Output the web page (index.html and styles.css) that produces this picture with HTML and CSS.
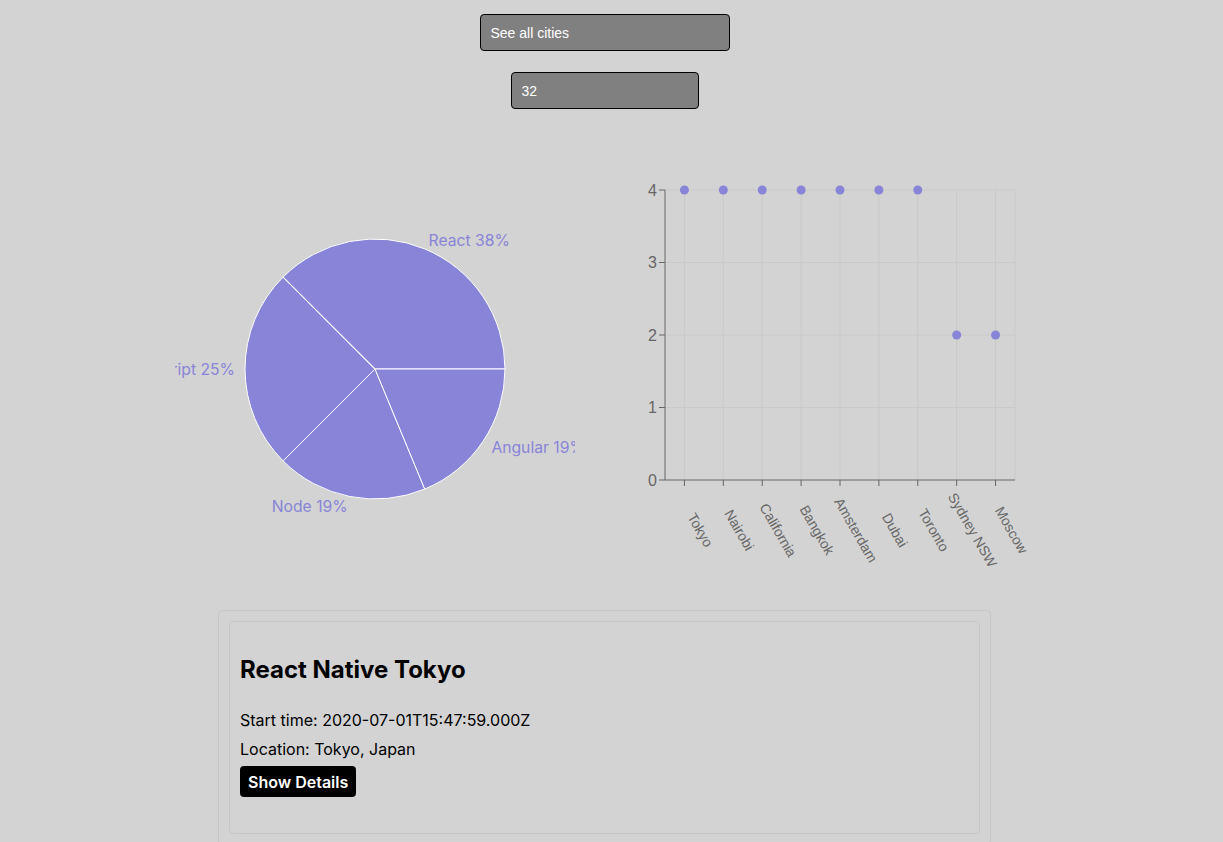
FILE: index.html
```html
<!DOCTYPE html>
<html lang="en">
<head>
<meta charset="utf-8">
<title>Meet App</title>
<link rel="stylesheet" href="styles.css">
</head>
<body>
<div class="app">
  <input class="city-search" type="text" value="See all cities">
  <input class="event-count" type="number" value="32">
  <div class="charts">
    <svg class="pie-chart" width="400" height="400" viewBox="0 0 400 400">
      <g class="slices" fill="#8884d8" stroke="#fff" stroke-width="1">
        <path d="M200 200 L330 200 A130 130 0 0 0 108.08 108.08 Z"/>
        <path d="M200 200 L108.08 108.08 A130 130 0 0 0 108.08 291.92 Z"/>
        <path d="M200 200 L108.08 291.92 A130 130 0 0 0 249.75 320.10 Z"/>
        <path d="M200 200 L249.75 320.10 A130 130 0 0 0 330 200 Z"/>
      </g>
      <g class="slice-edges" fill="none" stroke="#fff" stroke-width="1.1">
        <line x1="200" y1="200" x2="108.08" y2="108.08"/>
      </g>
      <g class="pie-labels">
        <text x="253.6" y="71.5" text-anchor="start">React 38%</text>
        <text x="60" y="200.5" text-anchor="end">JavaScript 25%</text>
        <text x="172.7" y="337.5" text-anchor="end">Node 19%</text>
        <text x="316.4" y="278.3" text-anchor="start">Angular 19%</text>
      </g>
    </svg>
    <svg class="scatter-chart" width="420" height="400" viewBox="0 0 420 400">
      <g class="grid" stroke="#c9c9c9" stroke-width="1">
        <line x1="50" y1="21" x2="400" y2="21"/>
        <line x1="50" y1="93.5" x2="400" y2="93.5"/>
        <line x1="50" y1="166" x2="400" y2="166"/>
        <line x1="50" y1="238.5" x2="400" y2="238.5"/>
        <line x1="69.44" y1="21" x2="69.44" y2="311"/>
        <line x1="108.33" y1="21" x2="108.33" y2="311"/>
        <line x1="147.22" y1="21" x2="147.22" y2="311"/>
        <line x1="186.11" y1="21" x2="186.11" y2="311"/>
        <line x1="225" y1="21" x2="225" y2="311"/>
        <line x1="263.89" y1="21" x2="263.89" y2="311"/>
        <line x1="302.78" y1="21" x2="302.78" y2="311"/>
        <line x1="341.67" y1="21" x2="341.67" y2="311"/>
        <line x1="380.56" y1="21" x2="380.56" y2="311"/>
        <line x1="400" y1="21" x2="400" y2="311"/>
      </g>
      <g class="axis" stroke="#666" stroke-width="1">
        <line x1="50" y1="21" x2="50" y2="311"/>
        <line x1="50" y1="311" x2="400" y2="311"/>
        <line x1="44" y1="21" x2="50" y2="21"/>
        <line x1="44" y1="93.5" x2="50" y2="93.5"/>
        <line x1="44" y1="166" x2="50" y2="166"/>
        <line x1="44" y1="238.5" x2="50" y2="238.5"/>
        <line x1="44" y1="311" x2="50" y2="311"/>
        <line x1="69.44" y1="311" x2="69.44" y2="317"/>
        <line x1="108.33" y1="311" x2="108.33" y2="317"/>
        <line x1="147.22" y1="311" x2="147.22" y2="317"/>
        <line x1="186.11" y1="311" x2="186.11" y2="317"/>
        <line x1="225" y1="311" x2="225" y2="317"/>
        <line x1="263.89" y1="311" x2="263.89" y2="317"/>
        <line x1="302.78" y1="311" x2="302.78" y2="317"/>
        <line x1="341.67" y1="311" x2="341.67" y2="317"/>
        <line x1="380.56" y1="311" x2="380.56" y2="317"/>
      </g>
      <g class="y-ticks" text-anchor="end">
        <text x="42" y="21">4</text>
        <text x="42" y="93.5">3</text>
        <text x="42" y="166">2</text>
        <text x="42" y="238.5">1</text>
        <text x="42" y="311">0</text>
      </g>
      <g class="x-ticks" text-anchor="middle">
        <text transform="translate(85.44 361) rotate(60)">Tokyo</text>
        <text transform="translate(124.33 361) rotate(60)">Nairobi</text>
        <text transform="translate(163.22 361) rotate(60)">California</text>
        <text transform="translate(202.11 361) rotate(60)">Bangkok</text>
        <text transform="translate(241 361) rotate(60)">Amsterdam</text>
        <text transform="translate(279.89 361) rotate(60)">Dubai</text>
        <text transform="translate(318.78 361) rotate(60)">Toronto</text>
        <text transform="translate(357.67 361) rotate(60)">Sydney NSW</text>
        <text transform="translate(396.56 361) rotate(60)">Moscow</text>
      </g>
      <g class="dots" fill="#8884d8">
        <circle cx="69.44" cy="21" r="4.5"/>
        <circle cx="108.33" cy="21" r="4.5"/>
        <circle cx="147.22" cy="21" r="4.5"/>
        <circle cx="186.11" cy="21" r="4.5"/>
        <circle cx="225" cy="21" r="4.5"/>
        <circle cx="263.89" cy="21" r="4.5"/>
        <circle cx="302.78" cy="21" r="4.5"/>
        <circle cx="341.67" cy="166" r="4.5"/>
        <circle cx="380.56" cy="166" r="4.5"/>
      </g>
    </svg>
  </div>
  <div class="event-list">
    <div class="event">
      <h2 class="event-title">React Native Tokyo</h2>
      <p class="event-line">Start time: 2020-07-01T15:47:59.000Z</p>
      <p class="event-line event-line-last">Location: Tokyo, Japan</p>
      <button class="details-btn" type="button">Show Details</button>
    </div>
  </div>
</div>
</body>
</html>
```

FILE: styles.css
```css
html, body {
  margin: 0;
  padding: 0;
  background: #d3d3d3;
}

body {
  font-family: Inter, "Noto Sans", sans-serif;
  color: #000;
}

.app {
  width: 1209px;
  display: flex;
  flex-direction: column;
  align-items: center;
}

.city-search,
.event-count {
  box-sizing: border-box;
  height: 37px;
  padding: 1px 10px 0;
  background: #808080;
  color: #fff;
  border: 1px solid #000;
  border-radius: 4px;
  font-family: "Liberation Sans", Arial, sans-serif;
  font-size: 14px;
  outline: none;
  -moz-appearance: textfield;
  appearance: textfield;
}

.event-count::-webkit-inner-spin-button,
.event-count::-webkit-outer-spin-button {
  -webkit-appearance: none;
  margin: 0;
}

.city-search {
  margin-top: 14px;
  width: 250px;
}

.event-count {
  margin-top: 21px;
  width: 188px;
}

.charts {
  margin-top: 60px;
  display: flex;
  gap: 40px;
  height: 400px;
}

.pie-chart,
.scatter-chart {
  display: block;
}

.pie-chart {
  overflow: hidden;
}

.scatter-chart {
  overflow: visible;
}

.pie-labels text {
  fill: #8884d8;
  font-size: 15.7px;
  dominant-baseline: central;
}

.y-ticks text {
  fill: #666;
  font-family: "Liberation Sans", Arial, sans-serif;
  font-size: 16px;
  dominant-baseline: central;
}

.x-ticks text {
  fill: #666;
  font-family: "Liberation Sans", Arial, sans-serif;
  font-size: 14px;
  dominant-baseline: central;
}

.event-list {
  box-sizing: border-box;
  margin-top: 41px;
  width: 773px;
  padding: 10px;
  border: 1px solid rgba(0, 0, 0, 0.06);
  border-radius: 4px;
}

.event {
  padding: 10px 10px 36px;
  border: 1px solid rgba(0, 0, 0, 0.06);
  border-radius: 4px;
}

.event-title {
  margin: 23px 0 26px;
  font-size: 24px;
  font-weight: 700;
}

.event-line {
  margin: 0 0 9px;
  font-size: 16px;
}

.event-line-last {
  margin-bottom: 7px;
}

.details-btn {
  display: block;
  height: 31px;
  padding: 0 8px;
  background: #000;
  color: #fff;
  border: none;
  border-radius: 4px;
  font-family: Inter, "Noto Sans", sans-serif;
  font-size: 16px;
  font-weight: 600;
}
```
